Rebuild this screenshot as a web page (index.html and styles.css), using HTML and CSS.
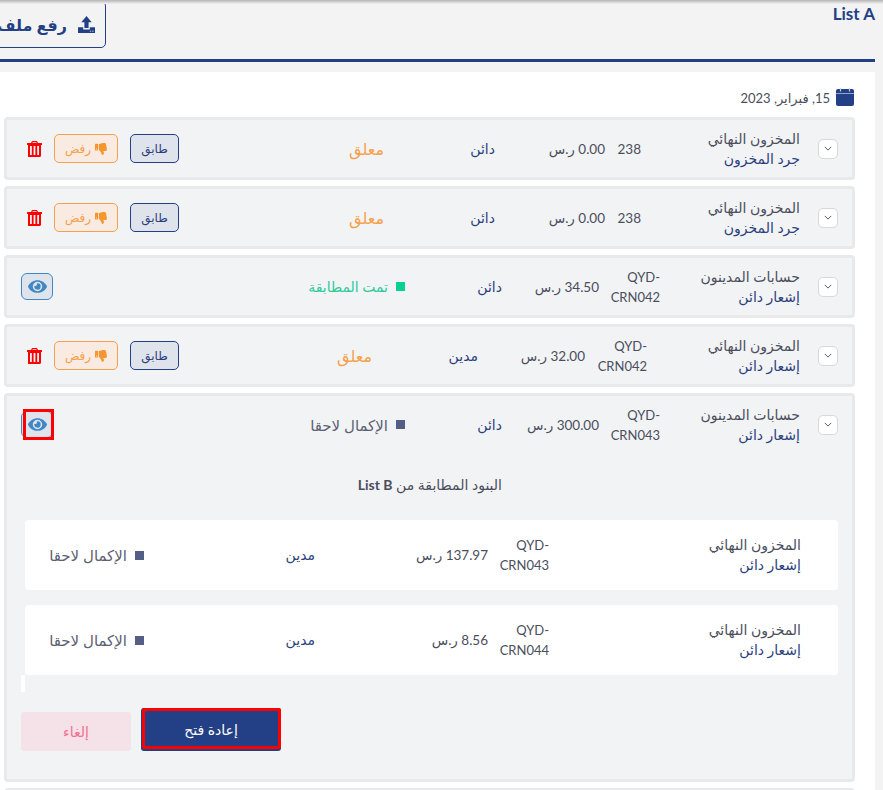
FILE: index.html
```html
<!DOCTYPE html>
<html lang="ar" dir="rtl">
<head>
<meta charset="utf-8">
<title>List A</title>
<link rel="stylesheet" href="styles.css">
</head>
<body>
<svg class="defs" width="0" height="0" aria-hidden="true">
  <defs>
    <symbol id="eye" viewBox="0 0 576 512"><path d="M572.52 241.4C518.29 135.59 410.93 64 288 64S57.68 135.64 3.48 241.41a32.35 32.35 0 0 0 0 29.19C57.71 376.41 165.07 448 288 448s230.32-71.64 284.52-177.41a32.35 32.35 0 0 0 0-29.19zM288 400a144 144 0 1 1 144-144 143.93 143.93 0 0 1-144 144zm0-240a95.31 95.31 0 0 0-25.31 3.79 47.85 47.85 0 0 1-66.9 66.9A95.78 95.78 0 1 0 288 160z"/></symbol>
    <symbol id="thumb" viewBox="0 0 512 512"><path d="M0 56v240c0 13.255 10.745 24 24 24h80c13.255 0 24-10.745 24-24V56c0-13.255-10.745-24-24-24H24C10.745 32 0 42.745 0 56zm40 200c0-13.255 10.745-24 24-24s24 10.745 24 24-10.745 24-24 24-24-10.745-24-24zm272 256c-20.183 0-29.485-39.293-33.931-57.795-5.206-21.666-10.589-44.07-25.393-58.902-32.469-32.524-49.503-73.967-89.117-113.111a11.98 11.98 0 0 1-3.558-8.521V59.901c0-6.541 5.243-11.878 11.783-11.998 15.831-.29 36.694-9.079 52.651-16.178C256.189 17.598 295.709.017 343.995 0h2.844c42.777 0 93.363.413 113.774 29.737 8.392 12.057 10.446 27.034 6.148 44.632 16.312 17.053 25.063 48.863 16.382 74.757 17.544 23.432 19.143 56.132 9.308 79.469l.11.11c11.893 11.949 19.523 31.259 19.439 49.197-.156 30.352-26.157 58.098-59.553 58.098H350.723C358.03 364.34 384 388.132 384 430.548 384 504 336 512 312 512z"/></symbol>
    <symbol id="trash" viewBox="0 0 15 16"><path fill-rule="evenodd" d="M5 0h5l1 2h3.500a.5.500 0 0 1 .5.500V4h-1v10.500a1.500 1.500 0 0 1-1.500 1.500h-9A1.500 1.500 0 0 1 1 14.500V4H0V2.500A.5.500 0 0 1 .5 2H4zM5.700 1.200L5.300 2h4.400l-.4-.8zM3 5v9h1.800V5zm3.600 0v9h1.800V5zm3.600 0v9H12V5z"/></symbol>
    <symbol id="chev" viewBox="0 0 10 6"><path d="M1 1l4 4 4-4" fill="none" stroke="currentColor" stroke-width="1.2"/></symbol>
  </defs>
</svg>

<header class="top">
  <h1 class="list-title"><span dir="ltr">List A</span></h1>
  <button class="upload">
    <svg class="upload-icon" viewBox="0 0 18 18"><path d="M9 0l5.500 6.500h-3.300v6.300H6.800V6.500H3.500z"/><path fill-rule="evenodd" d="M0 12h5.500v2.200h7V12H18v6H0zM12.500 15.500v1h1.500v-1zm2.500 0v1h1.500v-1z"/></svg>
    <span>رفع ملف</span>
  </button>
</header>

<main class="panel">
  <div class="date">
    <svg class="cal" viewBox="0 0 18 18"><path d="M2 1h14a2 2 0 0 1 2 2v13a2 2 0 0 1-2 2H2a2 2 0 0 1-2-2V3a2 2 0 0 1 2-2z"/><path d="M4.500 0v3.500M13.500 0v3.500" stroke="#c7d2ea" stroke-width="1.200"/><path d="M0 5.500h18" stroke="#c7d2ea" stroke-width=".7"/></svg>
    <span>15, فبراير, 2023</span>
  </div>

  <section class="card">
    <div class="row row-a">
      <button class="chev"><svg><use href="#chev"/></svg></button>
      <div class="name"><div>المخزون النهائي</div><div class="navy">جرد المخزون</div></div>
      <div class="code">238</div>
      <div class="amount">0.00 ر.س</div>
      <div class="navy">دائن</div>
      <div class="pending">معلق</div>
      <div class="actions">
        <button class="btn match">طابق</button>
        <button class="btn reject"><svg><use href="#thumb"/></svg>رفض</button>
        <svg class="trash"><use href="#trash"/></svg>
      </div>
    </div>
  </section>

  <section class="card">
    <div class="row row-a">
      <button class="chev"><svg><use href="#chev"/></svg></button>
      <div class="name"><div>المخزون النهائي</div><div class="navy">جرد المخزون</div></div>
      <div class="code">238</div>
      <div class="amount">0.00 ر.س</div>
      <div class="navy">دائن</div>
      <div class="pending">معلق</div>
      <div class="actions">
        <button class="btn match">طابق</button>
        <button class="btn reject"><svg><use href="#thumb"/></svg>رفض</button>
        <svg class="trash"><use href="#trash"/></svg>
      </div>
    </div>
  </section>

  <section class="card">
    <div class="row row-c">
      <button class="chev"><svg><use href="#chev"/></svg></button>
      <div class="name"><div>حسابات المدينون</div><div class="navy">إشعار دائن</div></div>
      <div class="code wrap">QYD-CRN042</div>
      <div class="amount">34.50 ر.س</div>
      <div class="navy">دائن</div>
      <div class="status matched"><i></i>تمت المطابقة</div>
      <div class="actions"><button class="eye"><svg><use href="#eye"/></svg></button></div>
    </div>
  </section>

  <section class="card">
    <div class="row row-d">
      <button class="chev"><svg><use href="#chev"/></svg></button>
      <div class="name"><div>المخزون النهائي</div><div class="navy">إشعار دائن</div></div>
      <div class="code wrap">QYD-CRN042</div>
      <div class="amount">32.00 ر.س</div>
      <div class="navy">مدين</div>
      <div class="pending">معلق</div>
      <div class="actions">
        <button class="btn match">طابق</button>
        <button class="btn reject"><svg><use href="#thumb"/></svg>رفض</button>
        <svg class="trash"><use href="#trash"/></svg>
      </div>
    </div>
  </section>

  <section class="card open">
    <div class="row row-c">
      <button class="chev"><svg><use href="#chev"/></svg></button>
      <div class="name"><div>حسابات المدينون</div><div class="navy">إشعار دائن</div></div>
      <div class="code wrap">QYD-CRN043</div>
      <div class="amount">300.00 ر.س</div>
      <div class="navy">دائن</div>
      <div class="status later"><i></i>الإكمال لاحقا</div>
      <div class="actions"><button class="eye marked"><svg><use href="#eye"/></svg></button></div>
    </div>

    <h2 class="matched-title">البنود المطابقة من <b dir="ltr">List B</b></h2>

    <div class="sub">
      <div class="name"><div>المخزون النهائي</div><div class="navy">إشعار دائن</div></div>
      <div class="code wrap">QYD-CRN043</div>
      <div class="amount">137.97 ر.س</div>
      <div class="navy">مدين</div>
      <div class="status later"><i></i>الإكمال لاحقا</div>
    </div>
    <div class="sub">
      <div class="name"><div>المخزون النهائي</div><div class="navy">إشعار دائن</div></div>
      <div class="code wrap">QYD-CRN044</div>
      <div class="amount">8.56 ر.س</div>
      <div class="navy">مدين</div>
      <div class="status later"><i></i>الإكمال لاحقا</div>
    </div>
    <div class="stub"></div>

    <div class="foot">
      <button class="cancel">إلغاء</button>
      <button class="reopen">إعادة فتح</button>
    </div>
  </section>

  <section class="card"></section>
</main>
</body>
</html>
```

FILE: styles.css
```css
*, *::before, *::after { box-sizing: border-box; }
html, body { height: 790px; overflow: hidden; }
body {
  margin: 0;
  width: 883px;
  background: #f3f3f4;
  color: #4a4e5c;
  font-family: "Lato", "Noto Sans", "DejaVu Sans", sans-serif;
  font-size: 14px;
  line-height: 20px;
  position: relative;
}
body::before {
  content: "";
  position: absolute;
  inset: 0 0 auto 0;
  height: 4px;
  background: linear-gradient(#b4b4b4, #f3f3f4);
}
button { font-family: inherit; cursor: pointer; padding: 0; }
.defs { position: absolute; }

.top {
  height: 62px;
  margin-right: 8px;
  border-bottom: 3px solid #233f85;
  display: flex;
  justify-content: space-between;
  align-items: flex-start;
}
.list-title {
  margin: 4px 0 0;
  font-size: 17px;
  line-height: 20px;
  font-weight: 700;
  color: #233f85;
}
.upload {
  width: 150px;
  height: 47px;
  margin: 1px 0 0 -44px;
  background: transparent;
  border: 1px solid #233f85;
  border-radius: 5px;
  color: #233f85;
  font-size: 16px;
  font-weight: 700;
  display: flex;
  align-items: center;
  gap: 11px;
  padding-right: 10px;
}
.upload-icon { width: 17px; height: 17px; fill: #233f85; flex: none; }

.panel {
  margin: 10px 8px 0 0;
  height: 718px;
  overflow: hidden;
  background: #fff;
  padding: 16px 20px 0 4px;
}
.date {
  height: 30px;
  display: flex;
  align-items: flex-start;
  gap: 6px;
  color: #4a4e5c;
  font-size: 13px;
  margin-right: 1px;
  margin-bottom: -1px;
}
.cal { width: 18px; height: 18px; fill: #233f85; flex: none; }

.card {
  width: 851px;
  background: #f2f3f5;
  border: 3px solid #e8e9eb;
  border-radius: 4px;
  margin-bottom: 6px;
  min-height: 63px;
}
.card.open { height: 389px; }

.row {
  height: 57px;
  display: grid;
  align-items: center;
  padding: 0 14px;
}
.row-a { grid-template-columns: 38px 159px 36px 110px 111px 205px 1fr; }
.row-c { grid-template-columns: 38px 140px 61px 97px 97px auto 1fr; }
.row-d { grid-template-columns: 38px 153px 62px 107px 106px 193px 1fr; }

.chev {
  width: 20px;
  height: 20px;
  background: #fff;
  border: 1px solid #d6d8dd;
  border-radius: 5px;
  color: #555;
  display: flex;
  align-items: center;
  justify-content: center;
}
.chev svg { width: 8px; height: 5px; }
.navy { color: #2b3f7e; }
.amount { color: #4a4e5c; font-size: 13.5px; }
.code { font-size: 13.5px; }
.wrap { width: 52px; font-size: 13px; }
.pending { color: #f7a04b; font-size: 16px; }

.status { display: flex; align-items: center; gap: 8px; font-size: 15px; }
.status i { width: 9px; height: 9px; flex: none; }
.matched { color: #2fc99b; font-size: 14px; }
.matched i { background: #08d193; }
.later { color: #5c5f72; }
.later i { background: #555f85; }

.actions { display: flex; align-items: center; justify-self: end; }
.btn {
  height: 29px;
  border-radius: 5px;
  font-size: 12px;
  display: flex;
  align-items: center;
  justify-content: center;
}
.match {
  width: 49px;
  background: #dfe3ec;
  border: 1px solid #233f85;
  color: #2b3f7e;
  margin-left: 12px;
}
.reject {
  width: 64px;
  gap: 4px;
  background: #f9ebe1;
  border: 1px solid #f7a04b;
  color: #f7a04b;
  margin-left: 12px;
}
.reject svg { width: 12px; height: 12px; fill: #f7952f; }
.trash { width: 15px; height: 16px; fill: #f00; margin-left: 6px; }

.eye {
  width: 32px;
  height: 27px;
  background: #dfe3ec;
  border: 1px solid #3f88c5;
  border-radius: 6px;
  display: flex;
  align-items: center;
  justify-content: center;
}
.eye svg { width: 19px; height: 17px; fill: #3f88c5; }
.marked { position: relative; }
.marked::after {
  content: "";
  position: absolute;
  top: -3px;
  left: 1px;
  width: 31px;
  height: 31px;
  border: 3px solid #f00;
}

.matched-title {
  margin: 22px 350px 0 0;
  font-size: 14px;
  font-weight: 400;
  line-height: 20px;
  color: #4a4e5c;
  height: 45px;
}
.sub {
  height: 70px;
  margin: 0 14px 15px 18px;
  background: #fff;
  border-radius: 4px;
  display: grid;
  grid-template-columns: 252px 61px 173px 171px 1fr;
  align-items: center;
  padding-right: 37px;
}
.stub { width: 4px; height: 17px; background: #fff; margin: -15px auto 0 14px; }

.foot {
  display: flex;
  direction: ltr;
  gap: 10px;
  margin: 16px 0 0 14px;
}
.reopen {
  position: relative;
  width: 140px;
  height: 43px;
  background: #233f85;
  color: #fff;
  font-size: 14px;
  border: 0;
  border-radius: 3px;
}
.reopen::after {
  content: "";
  position: absolute;
  top: 0;
  left: 1px;
  width: 139px;
  height: 41px;
  border: 3px solid #f00;
  border-radius: 2px;
}
.cancel {
  width: 110px;
  height: 39px;
  margin-top: 4px;
  background: #f5e1e8;
  color: #f0708f;
  font-size: 14px;
  border: 0;
  border-radius: 3px;
}
```
